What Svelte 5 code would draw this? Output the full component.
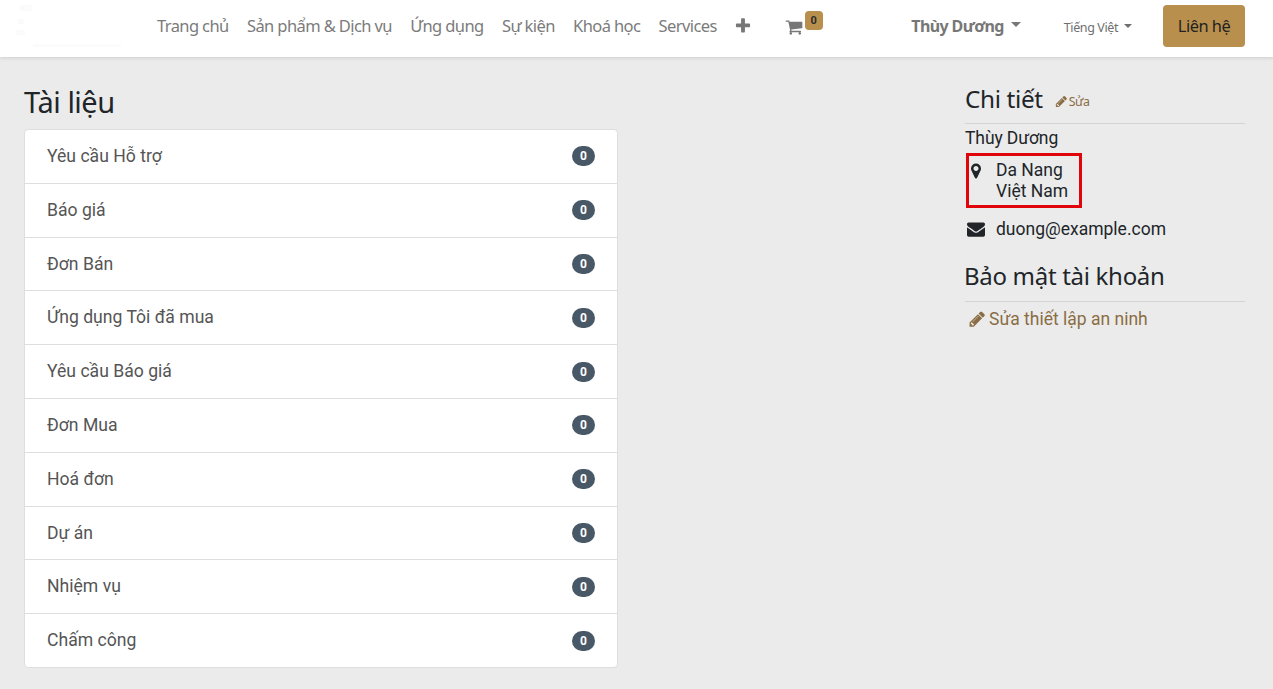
<script>
  const nav = ['Trang chủ', 'Sản phẩm & Dịch vụ', 'Ứng dụng', 'Sự kiện', 'Khoá học', 'Services'];
  const docs = ['Yêu cầu Hỗ trợ', 'Báo giá', 'Đơn Bán', 'Ứng dụng Tôi đã mua', 'Yêu cầu Báo giá', 'Đơn Mua', 'Hoá đơn', 'Dự án', 'Nhiệm vụ', 'Chấm công'];
  const pencil = 'M491 1536l91-91-235-235-91 91v107h128v128h107zm523-928q0-22-22-22-10 0-17 7l-542 542q-7 7-7 17 0 22 22 22 10 0 17-7l542-542q7-7 7-17zm-54-192l416 416-832 832h-416v-416zm683 96q0 53-37 90l-166 166-416-416 166-165q36-38 90-38 53 0 91 38l235 234q37 39 37 91z';
</script>

<div class="page">
  <header class="topbar">
    <svg class="logo" viewBox="0 0 130 52"><path d="M20 2h12v6H20zM18 16h6v5h-6zM16 27h9v5h-9zM33 41h88v3H33z"/></svg>
    <nav class="links">
      {#each nav as item}<a class="link">{item}</a>{/each}
      <svg class="plus" viewBox="0 0 1792 1792"><path d="M1600 736v192q0 40-28 68t-68 28h-416v416q0 40-28 68t-68 28h-192q-40 0-68-28t-28-68v-416h-416q-40 0-68-28t-28-68v-192q0-40 28-68t68-28h416v-416q0-40 28-68t68-28h192q40 0 68 28t28 68v416h416q40 0 68 28t28 68z"/></svg>
    </nav>
    <div class="cart">
      <svg class="carticon" viewBox="0 0 1792 1792"><path d="M704 1536q0 52-38 90t-90 38-90-38-38-90 38-90 90-38 90 38 38 90zm896 0q0 52-38 90t-90 38-90-38-38-90 38-90 90-38 90 38 38 90zm128-1088v512q0 24-16.5 42.5t-40.5 21.5l-1044 122q13 60 13 70 0 16-24 64h920q26 0 45 19t19 45-19 45-45 19h-1024q-26 0-45-19t-19-45q0-11 8-31.5t16-36 21.5-40 15.5-29.5l-177-823h-204q-26 0-45-19t-19-45 19-45 45-19h256q16 0 28.5 6.5t19.5 15.5 13 24.5 8 26 5.5 29.5 4.5 26h1201q26 0 45 19t19 45z"/></svg>
      <span class="cartbadge">0</span>
    </div>
    <div class="user">Thùy Dương<i class="caret big"></i></div>
    <div class="lang">Tiếng Việt<i class="caret"></i></div>
    <button class="contact">Liên hệ</button>
  </header>

  <main class="content">
    <section class="docs">
      <h2 class="title">Tài liệu</h2>
      <ul class="list">
        {#each docs as d}
          <li class="row"><span>{d}</span><span class="pill">0</span></li>
        {/each}
      </ul>
    </section>

    <aside class="side">
      <div class="head">
        <h3 class="h-detail">Chi tiết</h3>
        <a class="edit"><svg class="pen-s" viewBox="0 0 1536 1792"><path d={pencil}/></svg>Sửa</a>
      </div>
      <div class="name">Thùy Dương</div>
      <div class="addr">
        <svg class="pin" viewBox="0 0 1024 1792"><path d="M768 640q0-106-75-181t-181-75-181 75-75 181 75 181 181 75 181-75 75-181zm256 0q0 109-33 179l-364 774q-16 33-47.5 52t-67.5 19-67.5-19-47.5-52l-365-774q-33-70-33-179 0-212 150-362t362-150 362 150 150 362z"/></svg>
        <div>Da Nang<br />Việt Nam</div>
      </div>
      <div class="mail">
        <svg class="env" viewBox="0 0 1792 1792"><path d="M1792 710v794q0 66-47 113t-113 47h-1472q-66 0-113-47t-47-113v-794q44 49 101 87 362 246 497 345 57 42 92.5 65.5t94.5 48 110 24.5h2q51 0 110-24.5t94.5-48 92.5-65.5q170-123 498-345 57-39 100-87zm0-294q0 79-49 151t-122 123q-376 261-468 325-10 7-42.5 30.5t-54 38-52 32.5-57.5 27-50 9h-2q-23 0-50-9t-57.5-27-52-32.5-54-38-42.5-30.5q-91-64-262-182.5t-205-142.5q-62-42-117-115.5t-55-136.5q0-78 41.5-130t118.5-52h1472q65 0 112.5 47t47.5 113z"/></svg>
        <span>duong@example.com</span>
      </div>
      <h3 class="h-sec">Bảo mật tài khoản</h3>
      <a class="security"><svg class="pen-l" viewBox="0 0 1536 1792"><path d={pencil}/></svg>Sửa thiết lập an ninh</a>
    </aside>
  </main>
</div>

<style>
  :global(body) { margin: 0; background: #ebebeb; }
  .page { height: 689px; overflow: hidden; background: #ebebeb; font-family: Roboto, sans-serif; color: #212529; }
  .topbar { height: 57px; background: #fff; box-shadow: 0 1px 4px rgba(0,0,0,.13); display: flex; align-items: center; box-sizing: border-box; padding: 0 28px 5px 0; position: relative; font-family: "Noto Sans", sans-serif; }
  .logo { width: 130px; height: 52px; margin: 5px 27px 0 0; fill: #fbfbfb; flex: none; }
  .links { display: flex; align-items: center; gap: 18.3px; color: #7b7b7b; font-size: 16.5px; }
  .link { white-space: nowrap; letter-spacing: -0.6px; margin-top: -2px; }
  .plus { width: 18px; height: 18px; fill: #777; margin-left: -1px; }
  .cart { display: flex; margin-left: 33px; position: relative; width: 38px; height: 30px; align-items: center; }
  .carticon { width: 18px; height: 18px; fill: #777; margin-top: 1px; }
  .cartbadge { position: absolute; left: 19.5px; top: 0; width: 18px; height: 19px; background: #b98f4e; border-radius: 4px; font: 700 11px Roboto, sans-serif; color: #2b2b2b; display: flex; align-items: center; justify-content: center; }
  .user { margin-left: auto; font-weight: 700; font-size: 16px; letter-spacing: -.6px; color: #777; display: flex; align-items: center; }
  .lang { margin-left: 43px; font-size: 12.5px; letter-spacing: -.4px; color: #6f6f6f; display: flex; align-items: center; margin-top: 3px; }
  .caret { display: inline-block; margin-left: 6px; border-top: 4px solid #6f6f6f; border-left: 4px solid transparent; border-right: 4px solid transparent; margin-top: -4px; }
  .caret.big { margin-left: 7px; border-top-width: 5px; border-left-width: 5px; border-right-width: 5px; border-top-color: #777; margin-top: -3px; }
  .contact { margin-left: 31px; width: 82px; height: 42px; background: #b98f4e; border: 0; border-radius: 4px; font: 16.4px "Noto Sans", sans-serif; letter-spacing: -.5px; color: #222; padding: 0 0 2px; }
  .content { display: flex; justify-content: space-between; padding: 0 28px 0 24px; }
  .docs { width: 594px; }
  .title { margin: 27px 0 9px; font: 400 29px/36px "Noto Sans", sans-serif; letter-spacing: -.5px; color: #212529; }
  .list { list-style: none; margin: 0; padding: 0; background: #fff; border: 1px solid #dedede; border-radius: 4px; }
  .row { height: 53.8px; box-sizing: border-box; padding: 0 22px 0.6px; display: flex; align-items: center; justify-content: space-between; font-size: 17.6px; color: #555; border-bottom: 1px solid #dedede; }
  .row:last-child { border-bottom: 0; height: 53.2px; }
  .pill { width: 23px; height: 20px; border-radius: 10px; background: #495867; color: #fff; font-size: 12px; font-weight: 700; display: flex; align-items: center; justify-content: center; margin-top: 0.6px; }
  .side { width: 280px; font-size: 17.5px; }
  .head { display: flex; align-items: center; border-bottom: 1px solid #d4d4d4; height: 40px; margin-top: 27px; box-sizing: border-box; padding-bottom: 10px; }
  .h-detail { margin: 0; font: 400 24.3px "Noto Sans", sans-serif; letter-spacing: -.35px; }
  .edit { margin-left: 11px; font: 12.4px "Noto Sans", sans-serif; letter-spacing: -.4px; color: #8a6d44; display: flex; align-items: center; margin-top: 5px; }
  .pen-s { width: 13px; height: 13px; fill: #8a6d44; margin-right: 2px; }
  .name { margin-top: 3px; line-height: 22px; letter-spacing: -.1px; }
  .addr { box-sizing: border-box; margin: 4px 0 0 1px; width: 116px; height: 55px; border: 3px solid #e0040b; display: flex; align-items: flex-start; padding: 4px 0 0 2px; line-height: 21px; }
  .addr div { margin-left: 15px; }
  .pin { width: 10px; height: 18px; fill: #212529; margin-top: 2px; flex: none; }
  .mail { display: flex; align-items: center; margin-top: 10px; height: 22px; }
  .env { width: 18px; height: 18px; fill: #212529; margin-left: 2px; margin-right: 11px; }
  .h-sec { margin: 19px 0 0; font: 400 24px "Noto Sans", sans-serif; letter-spacing: -.3px; height: 42px; line-height: 33px; border-bottom: 1px solid #d4d4d4; text-indent: -1px; }
  .security { display: flex; align-items: center; margin-top: 7px; color: #8a6d44; letter-spacing: 0; }
  .pen-l { width: 18px; height: 18px; fill: #8a6d44; margin: 0 4px 0 2px; }
</style>
